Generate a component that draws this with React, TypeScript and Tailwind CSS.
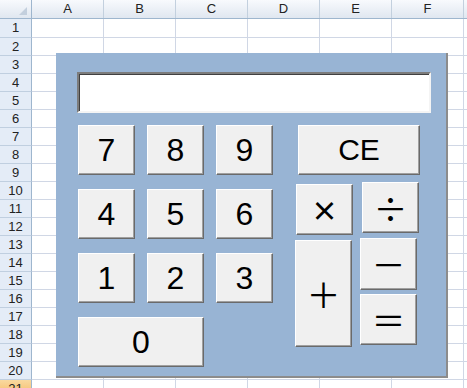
import React from 'react';

const cols = ['A', 'B', 'C', 'D', 'E', 'F'];
const rows = Array.from({ length: 21 }, (_, i) => i + 1);

const btn =
  'flex items-center justify-center bg-[#f0f0f0] border border-t-white border-l-white border-r-[#6a6a6a] border-b-[#6a6a6a] shadow-[inset_-1px_-1px_0_#a0a0a0] text-black leading-none select-none';

const Key: React.FC<{ label: string; className?: string; op?: boolean }> = ({ label, className = '', op }) => (
  <div
    className={`${btn} ${className} ${
      op ? "font-['Noto_Sans_CJK_JP',sans-serif]" : "font-['Liberation_Sans',Arial,sans-serif] text-[32px]"
    }`}
  >
    {label}
  </div>
);

const Sheet = () => (
  <div className="font-['Liberation_Sans',Arial,sans-serif] text-[13px] text-[#222]">
    {/* column headers */}
    <div className="flex h-[19px] border-b border-[#9eb6ce] bg-gradient-to-b from-[#f8fafd] to-[#e0e7f0]">
      <div className="relative w-[32px] border-r border-[#9eb6ce]">
        <svg className="absolute right-[4px] bottom-[3px]" width="8" height="8" viewBox="0 0 8 8">
          <polygon points="8,0 8,8 0,8" fill="#c3cfdd" />
        </svg>
      </div>
      {cols.map((c) => (
        <div key={c} className="w-[72px] border-r border-[#c3d0de] flex items-center justify-center">
          {c}
        </div>
      ))}
      <div className="flex-1" />
    </div>
    {rows.map((r) => (
      <div key={r} className={`flex ${r === 1 ? 'h-[19px]' : 'h-[18px]'}`}>
        <div
          className={`w-[32px] border-r border-b border-r-[#9eb6ce] flex items-center justify-center ${
            r === 21
              ? 'bg-gradient-to-b from-[#f9d99f] to-[#f6b860] border-b-[#e6a24a]'
              : 'bg-[#e4ecf7] border-b-[#c0cfe0]'
          }`}
        >
          {r}
        </div>
        {cols.map((c) => (
          <div key={c} className="w-[72px] bg-white border-r border-b border-[#d0d7e5]" />
        ))}
        <div className="flex-1 bg-white border-b border-[#d0d7e5]" />
      </div>
    ))}
  </div>
);

export default function App() {
  return (
    <div className="relative w-[467px] h-[388px] overflow-hidden bg-white">
      <Sheet />

      {/* calculator form */}
      <div className="absolute left-[56px] top-[53px] w-[392px] h-[325px] bg-[#98b4d4] border-r-2 border-b-2 border-[#8c8c8c] pl-[21px] pt-[19px]">
        <div className="w-[354px] h-[41px] bg-white border-2 border-t-[#7c7c7c] border-l-[#7c7c7c] border-r-[#f4f4f4] border-b-[#f4f4f4] shadow-[inset_1px_1px_0_#404040]" />

        <div className="flex mt-[12px]">
          {/* digits */}
          <div className="ml-[1px] grid grid-cols-[57px_57px_57px] auto-rows-[50px] gap-x-[12px] gap-y-[14px]">
            <Key label="7" />
            <Key label="8" />
            <Key label="9" />
            <Key label="4" />
            <Key label="5" />
            <Key label="6" />
            <Key label="1" />
            <Key label="2" />
            <Key label="3" />
            <Key label="0" className="col-span-2" />
          </div>

          {/* operators */}
          <div className="ml-[22px] flex flex-col">
            <Key label="CE" className="ml-[3px] w-[122px] h-[50px] !text-[30px]" />
            <div className="flex mt-[7px]">
              <div className="flex flex-col w-[65px]">
                <Key label="×" op className="mt-[2px] ml-[1px] w-[57px] h-[51px] text-[27px] font-bold" />
                <Key label="＋" op className="mt-[5px] w-[57px] h-[107px] text-[34px]" />
              </div>
              <div className="flex flex-col">
                <Key label="÷" op className="ml-[2px] w-[57px] h-[51px] text-[34px]" />
                <Key label="－" op className="mt-[5px] w-[57px] h-[52px] text-[34px]" />
                <Key label="＝" op className="mt-[4px] w-[57px] h-[51px] text-[34px]" />
              </div>
            </div>
          </div>
        </div>
      </div>
    </div>
  );
}
